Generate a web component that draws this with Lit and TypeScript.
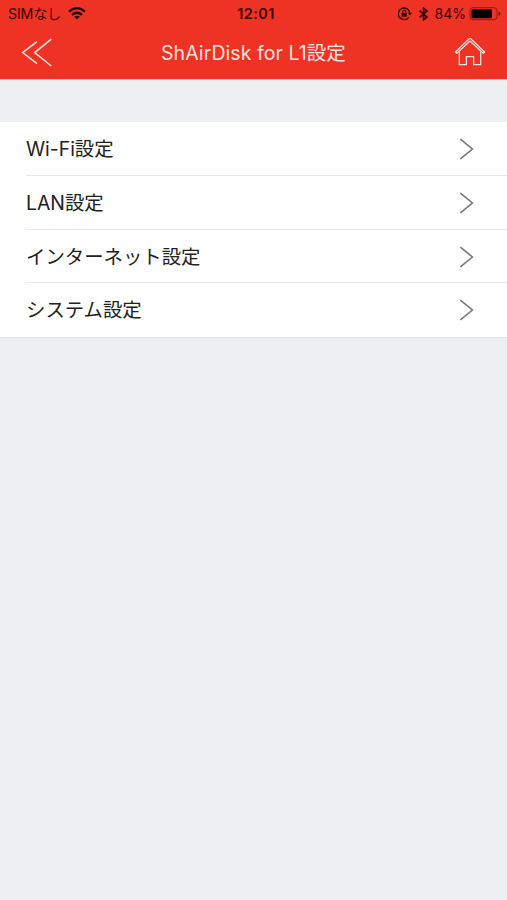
import { LitElement, html, css } from "lit";
import { customElement, property } from "lit/decorators.js";

@customElement("status-bar")
class StatusBar extends LitElement {
  static styles = css`
    :host { display: grid; grid-template-columns: 1fr auto 1fr; align-items: center; height: 27px; padding: 0 6px 0 8px; box-sizing: border-box; color: #3b0500; font-size: 14px; line-height: 27px; }
    .left, .right { display: flex; align-items: center; }
    .carrier { font-size: 14.2px; letter-spacing: -0.2px; }
    .wifi { margin-left: 7px; }
    .time { font-weight: 600; font-size: 14.5px; letter-spacing: 0.45px; padding-left: 3px; }
    .right { justify-content: flex-end; }
    .bt { margin: 0 7px 0 6px; }
    .battery { margin-left: 3px; }
    svg { display: block; flex: none; }
  `;
  render() {
    return html`
      <div class="left">
        <span class="carrier">SIMなし</span>
        <svg class="wifi" width="18" height="13" viewBox="0 0 18 13" fill="none" stroke="#240200" stroke-width="2.3">
          <path d="M1 4.6Q9-2.4 17 4.6M4 7.8Q9 3.6 14 7.8" />
          <path d="M9 12.5L6.2 9.8Q9 7.7 11.8 9.8Z" fill="#240200" stroke="none" />
        </svg>
      </div>
      <div class="time">12:01</div>
      <div class="right">
        <svg width="15" height="14" viewBox="0 0 15 14" fill="none" stroke="#3b0500" stroke-width="1.4">
          <path d="M10.8 10.3A5.8 5.8 0 1 1 11.8 5.6" />
          <path d="M9.6 5.8H14.2L11.9 8.6Z" fill="#3b0500" stroke="none" />
          <path d="M3.6 6H8.8V9.7H3.6Z" fill="#3b0500" stroke="none" />
          <path d="M4.6 6.2V4.9A1.6 1.6 0 0 1 7.8 4.9V6.2" stroke-width="1.1" />
        </svg>
        <svg class="bt" width="9" height="14" viewBox="0 0 9 14" fill="none" stroke="#3b0500" stroke-width="1.7">
          <path d="M.6 3.7L8 10L4.6 12.8V1.2L8 4L.6 10.3" />
        </svg>
        <span>84%</span>
        <svg class="battery" width="32" height="14" viewBox="0 0 32 14">
          <rect x="1" y=".7" width="27" height="12" rx="3" fill="none" stroke="#98180f" stroke-width="1" />
          <rect x="2.5" y="2.2" width="20.5" height="9" rx="1.3" fill="#050000" />
          <path d="M29.5 4.4Q31.5 4.9 31.5 6.7T29.5 9Z" fill="#8b160e" />
        </svg>
      </div>
    `;
  }
}

@customElement("nav-bar")
class NavBar extends LitElement {
  static styles = css`
    :host { display: grid; grid-template-columns: 1fr auto 1fr; align-items: center; height: 51px; padding: 0 21px; box-sizing: border-box; color: #ffe3df; }
    .title { font-size: 19.5px; line-height: 28px; letter-spacing: 0.08px; white-space: nowrap; }
    .home { justify-self: end; }
    svg { display: block; fill: none; stroke: #ffe3df; }
  `;
  render() {
    return html`
      <svg class="back" width="32" height="30" viewBox="0 0 32 30" stroke-width="1.5">
        <path d="M16 3.6L1.7 14.6L16 25.7M30.3 1.2L13.7 14.6L30.3 28" />
      </svg>
      <div class="title">ShAirDisk for L1設定</div>
      <svg class="home" width="32" height="30" viewBox="0 -1 32 30" stroke-width="1.25">
        <path d="M1.4 13L16-.9L30.6 13L29.3 14.3L16 2.1L2.7 14.3Z" />
        <path d="M5.3 13V25.7H12.4V17.7H19.6V25.7H26.7V13" />
      </svg>
    `;
  }
}

@customElement("setting-row")
class SettingRow extends LitElement {
  @property() label = "";
  static styles = css`
    :host { display: block; padding-left: 26px; }
    .row { height: 53.75px; box-sizing: border-box; border-bottom: 1px solid #e9eaeb; display: flex; align-items: center; justify-content: space-between; padding: 1.5px 33px 0 0; }
    :host([last]) .row { border-bottom-color: transparent; }
    .label { font-size: 19.4px; line-height: 28px; color: #222; white-space: nowrap; }
    svg { display: block; }
  `;
  render() {
    return html`
      <div class="row">
        <span class="label">${this.label}</span>
        <svg width="15" height="22" viewBox="0 0 15 22" fill="none" stroke="#777" stroke-width="1.6">
          <path d="M1.4 1.2L13.4 11L1.4 20.8" />
        </svg>
      </div>
    `;
  }
}

@customElement("app-root")
class AppRoot extends LitElement {
  static styles = css`
    :host { display: block; height: 900px; background: #edeff1; font-family: Inter, "Noto Sans CJK JP", sans-serif; overflow: hidden; }
    header { background: #ee3224; height: 79px; border-bottom: 1px solid #f5b5b1; box-sizing: content-box; }
    .list { margin-top: 42px; background: #fff; border-bottom: 1px solid #e2e4e5; }
  `;
  render() {
    const rows = ["Wi-Fi設定", "LAN設定", "インターネット設定", "システム設定"];
    return html`
      <header><status-bar></status-bar><nav-bar></nav-bar></header>
      <div class="list">
        ${rows.map((r, i) => html`<setting-row .label=${r} ?last=${i === rows.length - 1}></setting-row>`)}
      </div>
    `;
  }
}
